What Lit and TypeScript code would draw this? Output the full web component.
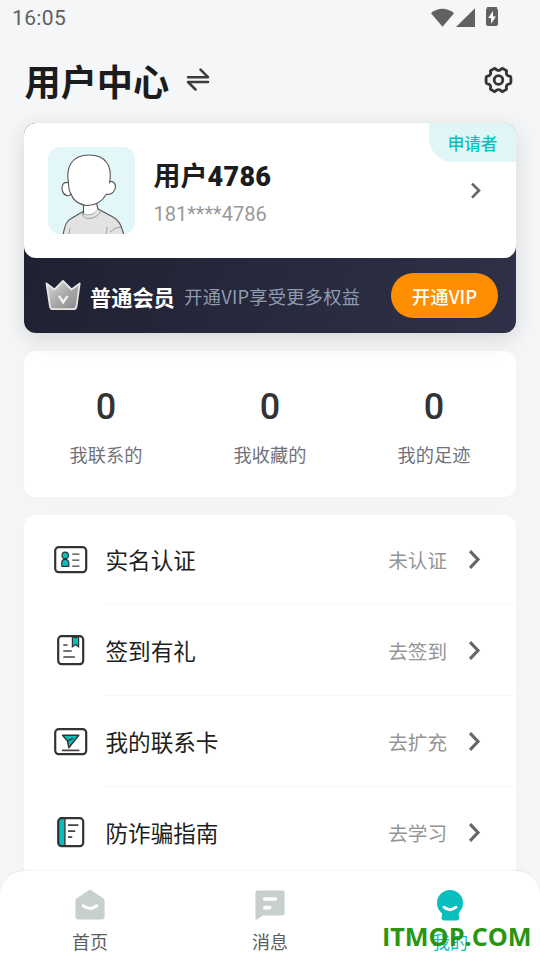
import { LitElement, html, css, svg } from "lit";
import { customElement, property } from "lit/decorators.js";
import { classMap } from "lit/directives/class-map.js";

const chevron = html`<svg width="18" height="24" viewBox="0 0 18 24" fill="none" stroke="#666" stroke-width="3.1"><path d="M5 4.2 13 12.5 5 20.8"/></svg>`;

const menuIcons: Record<string, unknown> = {
  id: svg`
    <rect x="3.2" y="7.2" width="31" height="25" rx="3.6" stroke="#333" stroke-width="2.2"/>
    <circle cx="13.2" cy="15.4" r="3.2" fill="#08bfbd" stroke="#333" stroke-width="1.2"/>
    <path d="M9.8 26.3v-3.6a3.5 3.3 0 0 1 7 0v3.6z" fill="#08bfbd" stroke="#333" stroke-width="1.2"/>
    <path d="M20.2 14.2h7.2M20.2 20.2h7.2M20.2 26.2h7.2" stroke="#444" stroke-width="1.3"/>`,
  sign: svg`
    <path d="M20.4 6.3h6.2v9.4l-3.1-2.3-3.1 2.3z" fill="#08bfbd" stroke="#333" stroke-width="1.2"/>
    <rect x="6.2" y="5.2" width="25" height="28" rx="3.4" stroke="#333" stroke-width="2.2"/>
    <path d="M11.3 14h4.2M11.3 20h8.4M11.3 26h11.6" stroke="#444" stroke-width="1.7"/>`,
  card: svg`
    <rect x="3.2" y="7.2" width="31" height="25" rx="3.6" stroke="#333" stroke-width="2.2"/>
    <path d="M10.6 13.3h16.2L16.8 25.7l-1.3-6.6zM15.5 19.1l5.6-3" fill="#08bfbd" stroke="#333" stroke-width="1.4" stroke-linejoin="round"/>
    <path d="M10 28.4h17.4" stroke="#444" stroke-width="1.7"/>`,
  guide: svg`
    <path d="M7 6h5.5v27H7z" fill="#08bfbd"/>
    <path d="M12.9 6v27" stroke="#333" stroke-width="1.4"/>
    <rect x="6.2" y="5.2" width="25" height="28" rx="3.4" stroke="#333" stroke-width="2.2"/>
    <path d="M16 12.2h10.4M16 18.2h7.2M16 24.2h4.2" stroke="#444" stroke-width="1.7"/>`,
};

@customElement("menu-row")
class MenuRow extends LitElement {
  @property() icon = "id";
  @property() label = "";
  @property() hint = "";
  static styles = css`
    :host { display: flex; height: 91px; padding-left: 28px; box-sizing: border-box; }
    .icon { align-self: flex-start; margin-top: 25px; width: 52px; height: 40px; flex: none; }
    .body { flex: 1; display: flex; align-items: center; border-bottom: 1.5px solid #f7f7f8; padding: 0 33px 0 1.5px; box-sizing: border-box; height: 90px; }
    .label { flex: 1; font-size: 22.6px; color: #1d1e20; }
    .hint { font-size: 19.6px; color: #959595; margin-right: 18px; }
    svg { display: block; }
  `;
  render() {
    return html`
      <div class="icon"><svg width="40" height="40" viewBox="0 0 40 40" fill="none">${menuIcons[this.icon]}</svg></div>
      <div class="body">
        <span class="label">${this.label}</span>
        <span class="hint">${this.hint}</span>
        ${chevron}
      </div>`;
  }
}

@customElement("app-root")
class AppRoot extends LitElement {
  static styles = css`
    :host { display: flex; flex-direction: column; position: relative; width: 540px; height: 960px; overflow: hidden; background: #f4f6f8; font-family: Roboto, "Noto Sans CJK SC", sans-serif; color: #1b1c1e; }
    svg { display: block; flex: none; }
    .status { height: 36px; flex: none; display: flex; justify-content: space-between; align-items: center; padding: 0 36px 0 12px; box-sizing: border-box; }
    .time { font-size: 21px; color: #5f5f5f; letter-spacing: .35px; }
    .header { height: 87px; flex: none; display: flex; align-items: center; padding: 0 27px 0 24.5px; box-sizing: border-box; }
    .title { font-size: 36.2px; font-weight: 700; line-height: 50px; margin: 8px 16.5px 0 0; }
    .gear { margin-left: auto; }
    .header svg { margin-top: 1px; }
    .content { flex: 1; min-height: 0; padding: 0 24px; display: flex; flex-direction: column; gap: 18px; }
    .profile { flex: none; height: 210px; border-radius: 12px; background: linear-gradient(110deg, #1e1f2f, #2f3148); box-shadow: 0 6px 24px rgba(0,0,0,.13); z-index: 1; }
    .user { height: 135px; border-radius: 12px; background: #fff; display: flex; position: relative; align-items: center; padding: 0 30px 0 24px; overflow: hidden; box-sizing: border-box; }
    .avatar { border-radius: 12px; }
    .who { flex: 1; margin-left: 18.5px; padding-top: 4px; }
    .name { font-size: 27px; line-height: 38px; font-weight: 700; }
    .name b { letter-spacing: .3px; }
    .phone { font-size: 20px; line-height: 28px; color: #999; margin-top: 4px; }
    .tag { position: absolute; right: 0; top: 0; width: 87px; height: 39px; border-bottom-left-radius: 24px; background: #e0f6f6; color: #08bfbd; font-size: 16.5px; font-weight: 500; line-height: 43px; text-align: center; }
    .vip { height: 75px; display: flex; align-items: center; padding: 0 18px; box-sizing: border-box; }
    .level { color: #fff; font-size: 21.2px; font-weight: 700; margin: 2px 9.5px 0 6px; }
    .perk { color: #8f9cb0; font-family: "Noto Sans CJK SC", sans-serif; font-size: 18.2px; letter-spacing: .28px; flex: 1; white-space: nowrap; }
    .open { width: 107px; height: 45px; border-radius: 23px; background: #ff8e00; color: #fff; font-family: "Noto Sans CJK SC", sans-serif; font-size: 18.4px; font-weight: 500; line-height: 46px; text-align: center; }
    .stats { flex: none; height: 145.5px; border-radius: 12px; background: #fff; display: grid; grid-template-columns: repeat(3, 1fr); text-align: center; box-sizing: border-box; padding-top: 34px; box-shadow: 0 2px 20px rgba(0,0,0,.025); }
    .num { font-size: 36px; line-height: 44px; font-weight: 500; color: #333; }
    .cap { font-size: 18.2px; line-height: 26px; color: #6f727b; margin-top: 14px; }
    .menu { flex: none; border-radius: 12px; background: #fff; box-shadow: 0 2px 20px rgba(0,0,0,.025); }
    .tabs { flex: none; height: 89px; z-index: 2; border-radius: 24px 24px 0 0; background: #fff; box-shadow: 0 -1px 2px rgba(0,0,0,.05); display: grid; grid-template-columns: repeat(3, 1fr); position: relative; }
    .tab { display: flex; flex-direction: column; align-items: center; padding-top: 16px; font-size: 18px; line-height: 26px; color: #5c5c5c; gap: 9px; }
    .tab.active { color: #08bfbd; }
    .mark { position: absolute; right: 8.5px; bottom: 7px; font: 700 25.2px/34px "Open Sans", sans-serif; color: #2a9512; white-space: nowrap; }
  `;

  private stats = [["0", "我联系的"], ["0", "我收藏的"], ["0", "我的足迹"]];
  private rows = [
    ["id", "实名认证", "未认证"],
    ["sign", "签到有礼", "去签到"],
    ["card", "我的联系卡", "去扩充"],
    ["guide", "防诈骗指南", "去学习"],
  ];
  private tabs = [
    { name: "首页", icon: svg`<path d="M13.6 3.9a4 4 0 0 1 4.8 0l10.7 7.4a3 3 0 0 1 1.5 2.6v16.2a2.4 2.4 0 0 1-2.4 2.4H3.8a2.4 2.4 0 0 1-2.4-2.4V13.9a3 3 0 0 1 1.5-2.6z" fill="#c8d0cf"/><path d="M9.2 18.8q6.8 5.2 13.6 0" stroke="#fff" stroke-width="3.1" stroke-linecap="round"/>` },
    { name: "消息", icon: svg`<path d="M4 3.6h24.2a2.4 2.4 0 0 1 2.4 2.4v20.2a2.4 2.4 0 0 1-2.4 2.4H8.8L3.6 32.2c-1 .7-2.2.2-2.2-1V6A2.4 2.4 0 0 1 4 3.6z" fill="#c8d0cf"/><path d="M10.8 12h10.6M10.8 20.6h4.8" stroke="#fff" stroke-width="3.7" stroke-linecap="round"/>` },
    { name: "我的", icon: svg`<circle cx="16" cy="16" r="13" fill="#08bfbd"/><path d="M7.7 24h17.3l-.4 3.5.6 3a2.5 2.5 0 0 1-2.5 3H10a2.5 2.5 0 0 1-2.5-3l.6-3z" fill="#08bfbd"/><path d="M10 20.2q6 5 12 0" stroke="#fff" stroke-width="2.9" stroke-linecap="round"/>` },
  ];

  render() {
    return html`
      <div class="status">
        <span class="time">16:05</span>
        <svg width="74" height="24" viewBox="0 0 74 24" fill="#616161">
          <path d="M1 7.2C7.5 1.2 17.5 1.2 24 7.2L12.5 20.8z"/>
          <path d="M26 21 45 2.3V21z"/>
          <path d="M57 1h10v1.2h-.5a2 2 0 0 1 1.500 2V18a2 2 0 0 1-2 2H58a2 2 0 0 1-2-2V4.2a2 2 0 0 1 1-2z"/>
          <path d="M63 5l-4.8 7h2.9v5.7l4.8-7.2H63z" fill="#fff"/>
        </svg>
      </div>
      <div class="header">
        <span class="title">用户中心</span>
        <svg width="24" height="24" viewBox="0 0 24 24" fill="none" stroke="#3c3c3c" stroke-width="2.5" stroke-linecap="round" stroke-linejoin="round"><path d="M2 9.2h20L14.5 1.7M22 14H2l7.5 7.5"/></svg>
        <svg class="gear" width="29" height="28" viewBox="0 0 29 28" fill="none" stroke="#333" stroke-width="2.8" stroke-linejoin="round">
          <path d="M11.5 2.9C13 5 16 5 17.5 2.9Q18 2.2 18.9 2.6L22.1 4.5Q22.8 5 22.5 5.8C21.9 8.5 23.2 10 25.5 10.1Q26.8 10.3 26.9 11.5V16.5Q26.8 17.7 25.5 17.9C23.2 18 21.9 19.5 22.5 22.2Q22.8 23 22.1 23.5L18.9 25.4Q18 25.8 17.5 25.1C16 23 13 23 11.5 25.1Q11 25.8 10.1 25.4L6.9 23.5Q6.2 23 6.5 22.2C7.1 19.5 5.8 18 3.5 17.9Q2.2 17.7 2.1 16.5V11.5Q2.2 10.3 3.5 10.1C5.8 10 7.1 8.5 6.5 5.8Q6.2 5 6.9 4.5L10.1 2.6Q11 2.2 11.5 2.9Z"/>
          <circle cx="14.5" cy="14" r="4.3"/>
        </svg>
      </div>
      <div class="content">
        <div class="profile">
          <div class="user">
            <svg class="avatar" width="87" height="87" viewBox="0 0 87 87" fill="none" stroke="#555" stroke-width="1.1" stroke-linejoin="round">
              <path d="M0 0h87v87H0z" fill="#e3f6f8" stroke="none"/>
              <path d="M15 88C17 78 18 74 24 71L35 64.500 50 62 65 70C71 73 73 78 76 88z" fill="#e2e2e2"/>
              <path d="M35.500 55v12q7 3 14-2V55z" fill="#fff" stroke="none"/>
              <path d="M35.500 57v10M48.500 56 50 62"/>
              <path d="M34 65.500Q35 72 42 71.500 51 70 53 63M35.500 67q8 3 14-4M21 88l1-7M58 88q1-5 1-8M62 85q5-5 11-5" stroke="#999" stroke-width=".9"/>
              <path d="M20.500 36C15 33.500 13 40 14.500 44 16 49 21 50 23 47 25 53 30 57 38 58.500 48 59 55 53 58.500 47 64 49 68 43 67.500 38.500 66 33.500 62 33.500 61.500 36 65 18 57 8 41 8 24 8 17.500 20 20.500 36z" fill="#fff"/>
              <path d="M20.500 36q0 7 2.500 11"/>
            </svg>
            <div class="who">
              <div class="name">用户<b>4786</b></div>
              <div class="phone">181****4786</div>
            </div>
            <svg width="20" height="24" viewBox="0 0 20 24" fill="none" stroke="#666" stroke-width="2.6"><path d="M6 4.600 13 11.500 6 18.600"/></svg>
            <div class="tag">申请者</div>
          </div>
          <div class="vip">
            <svg width="42" height="38" viewBox="0 0 42 38" fill="none">
              <defs><linearGradient id="crown" x1="0" y1="0" x2="1" y2="1"><stop stop-color="#ddd"/><stop offset=".5" stop-color="#aaa"/><stop offset="1" stop-color="#888"/></linearGradient></defs>
              <path d="M4.500 6.500 12.500 12.500 21 4 29.500 12.500 37.700 6.500 34.500 29.500Q34 32.200 31.500 32.200H11Q8.500 32.200 8 29.500z" fill="url(#crown)" stroke="#e6e6e6" stroke-width="1.8" stroke-linejoin="round"/>
              <path d="M17 19l4.200 6.300L25.500 19" stroke="#eee" stroke-width="2.5"/>
            </svg>
            <span class="level">普通会员</span>
            <span class="perk">开通VIP享受更多权益</span>
            <span class="open">开通VIP</span>
          </div>
        </div>
        <div class="stats">
          ${this.stats.map(([n, t]) => html`<div><div class="num">${n}</div><div class="cap">${t}</div></div>`)}
        </div>
        <div class="menu">
          ${this.rows.map(([i, l, h]) => html`<menu-row icon=${i} label=${l} hint=${h}></menu-row>`)}
        </div>
      </div>
      <div class="tabs">
        ${this.tabs.map((t, i) => html`<div class=${classMap({ tab: true, active: i === 2 })}><svg width="32" height="34" viewBox="0 0 32 34" fill="none">${t.icon}</svg><span>${t.name}</span></div>`)}
        <div class="mark">ITMOP.COM</div>
      </div>`;
  }
}
